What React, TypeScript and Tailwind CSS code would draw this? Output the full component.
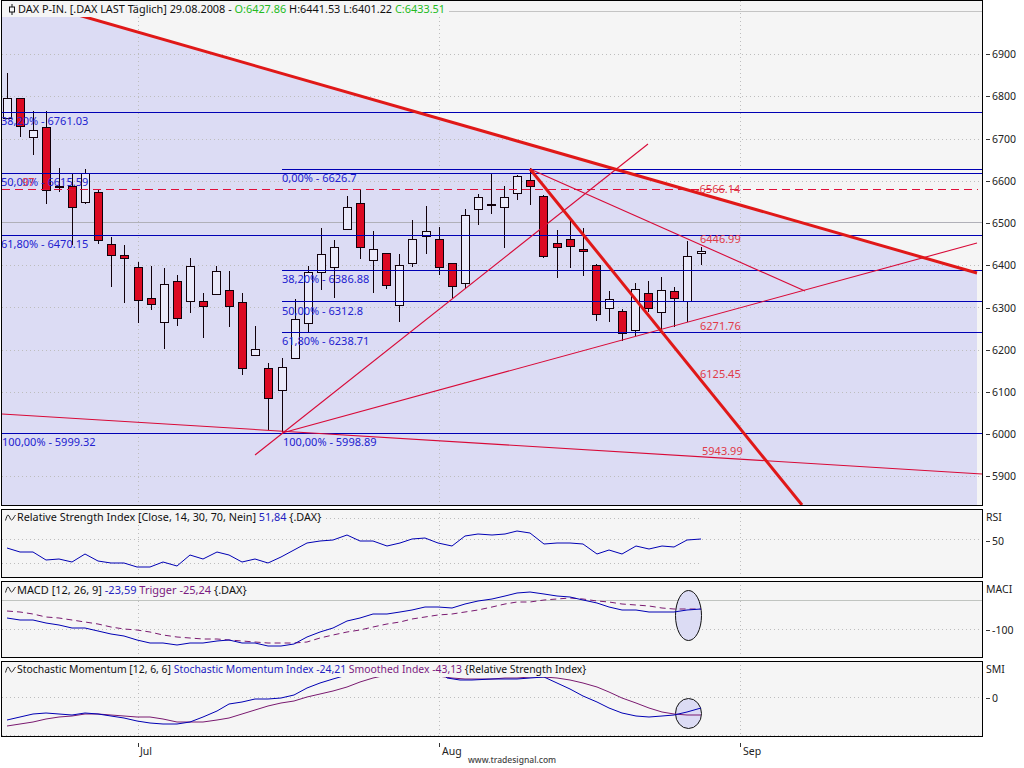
import { clsx } from "clsx";

const FONT = "font-['Noto_Sans',sans-serif]";

const BLUE = "#0000b4";
const THIN_RED = "#d80a38";
const VERTICALS = [138.5, 439.5, 740.5];

// x, high, low, body top, body bottom, red?
const candles: [number, number, number, number, number, boolean][] = [
  [7.5, 73, 118, 98, 118, false],
  [20.5, 98, 137, 98, 126, true],
  [33.5, 111, 155, 130, 137, false],
  [46.5, 111, 204, 127, 190, true],
  [59.5, 168, 192, 186, 187, false],
  [72.5, 173, 245, 186, 207, true],
  [85.5, 169, 204, 173, 202, false],
  [98.5, 190, 244, 192, 240, true],
  [111.5, 237, 287, 244, 255, true],
  [124.5, 245, 303, 255, 258, true],
  [138.5, 262, 323, 267, 300, true],
  [151.5, 266, 310, 298, 304, true],
  [164.5, 268, 349, 284, 322, false],
  [177.5, 275, 326, 281, 318, true],
  [190.5, 258, 313, 266, 301, false],
  [203.5, 293, 338, 301, 306, true],
  [216.5, 266, 294, 271, 294, false],
  [229.5, 271, 327, 290, 306, true],
  [242.5, 293, 375, 302, 368, true],
  [255.5, 326, 355, 349, 355, false],
  [268.5, 363, 430, 368, 398, true],
  [282.5, 358, 432, 367, 390, false],
  [295.5, 299, 358, 319, 358, false],
  [308.5, 266, 333, 272, 323, false],
  [321.5, 228, 290, 254, 272, false],
  [334.5, 240, 298, 247, 267, false],
  [347.5, 196, 230, 207, 229, false],
  [360.5, 190, 259, 203, 247, true],
  [373.5, 231, 293, 249, 260, false],
  [386.5, 253, 289, 253, 285, true],
  [399.5, 254, 322, 265, 305, false],
  [412.5, 220, 267, 239, 263, false],
  [426.5, 206, 254, 231, 236, false],
  [439.5, 227, 275, 239, 267, true],
  [452.5, 263, 298, 263, 286, true],
  [465.5, 209, 289, 215, 283, false],
  [478.5, 194, 225, 197, 209, false],
  [491.5, 173, 214, 204, 205, false],
  [504.5, 186, 248, 197, 207, false],
  [517.5, 175, 200, 176, 193, false],
  [530.5, 168, 205, 180, 186, true],
  [543.5, 195, 258, 196, 256, true],
  [557.5, 230, 278, 243, 247, true],
  [570.5, 218, 268, 239, 246, true],
  [583.5, 228, 276, 249, 251, true],
  [596.5, 264, 321, 265, 314, true],
  [609.5, 291, 322, 299, 308, false],
  [622.5, 309, 341, 311, 333, true],
  [635.5, 283, 336, 289, 330, false],
  [648.5, 281, 312, 293, 308, true],
  [661.5, 277, 332, 290, 312, false],
  [674.5, 287, 327, 291, 298, true],
  [687.5, 241, 322, 256, 301, false],
  [701.5, 247, 265, 251, 253, false],
];

const rsi = "7,548 20,552 33,552 46,560 59,559 72,562 85,554 98,561 111,563 124,563 137,567 150,567 163,562 177,566 190,555 203,559 217,552 229,555 242,562 255,559 268,563 281,557 294,550 307,543 320,541 333,540 347,535 360,541 373,541 387,546 400,543 412,539 425,538 438,543 452,546 465,536 478,534 492,535 505,534 517,531 530,533 544,544 557,543 570,543 583,544 597,554 609,550 622,554 636,546 649,549 662,546 674,547 687,540 701,539";
const macd = "7,618 20,620 33,620 46,623 59,625 72,628 85,628 98,631 111,634 124,636 137,640 150,643 163,643 177,645 190,643 203,643 217,641 229,640 242,643 255,643 268,646 281,646 294,644 307,637 320,632 333,628 347,621 360,618 373,614 387,614 400,612 412,610 425,607 438,607 452,608 465,604 478,601 492,599 505,596 517,593 530,592 544,594 557,596 570,597 583,600 597,603 609,607 622,610 636,610 649,612 662,612 674,612 687,610 701,609";
const trigger = "7,611 20,612 33,614 46,617 59,618 72,620 85,622 98,624 111,627 124,629 137,630 150,632 163,635 177,637 190,638 203,639 217,639 229,640 242,641 255,642 268,643 281,643 294,643 307,642 320,638 333,635 347,632 360,630 373,627 387,624 400,622 412,619 425,617 438,615 452,614 465,612 478,610 492,607 505,604 517,602 530,602 544,600 557,599 570,598 583,599 597,601 609,602 622,604 636,605 649,606 662,608 674,609 687,609 701,609";
const smi = "7,720 20,717 33,714 46,713 59,714 72,715 85,713 98,714 111,716 124,718 137,721 150,723 163,724 177,724 190,722 203,717 217,711 229,704 242,702 255,699 268,699 281,698 294,695 307,688 320,683 333,679 347,675 360,673 373,671 387,671 440,671 447,678 460,680 472,680 492,679 505,679 517,679 530,678 544,677 557,683 570,689 583,696 597,702 609,708 622,713 636,716 649,717 662,716 674,715 687,712 701,708";
const smooth = "7,726 20,724 33,722 46,719 59,717 72,716 85,714 98,714 111,715 124,716 137,717 150,717 163,719 177,722 190,722 203,722 217,720 229,718 242,714 255,710 268,706 281,703 294,701 307,697 320,694 333,691 347,687 360,682 373,678 387,675 400,673 412,673 425,674 438,676 452,678 465,679 478,679 492,679 505,678 517,678 530,677 544,677 557,678 570,680 583,683 597,687 609,692 622,698 636,703 649,708 662,712 674,714 687,715 701,715";

const priceAxis = [
  [6900, 54],
  [6800, 96],
  [6700, 139],
  [6600, 181],
  [6500, 223],
  [6400, 265],
  [6300, 308],
  [6200, 350],
  [6100, 392],
  [6000, 434],
  [5900, 476],
];

const blueLabels: [string, number, number][] = [
  ["38,20% - 6761.03", 1, 125],
  ["50,00% - 6615.59", 1, 186],
  ["61,80% - 6470.15", 1, 248],
  ["100,00% - 5999.32", 2, 446],
  ["0,00% - 6626.7", 282, 182],
  ["38,20% - 6386.88", 282, 283],
  ["50,00% - 6312.8", 282, 315],
  ["61,80% - 6238.71", 282, 345],
  ["100,00% - 5998.89", 283, 446],
];

const redLabels: [string, number, number][] = [
  ["97", 22, 186],
  ["-6566.14", 696, 193],
  ["6446.99", 700, 243],
  ["6271.76", 700, 330],
  ["6125.45", 700, 378],
  ["5943.99", 702, 455],
];

function Grid({ ys, top, bottom, right = 982 }: { ys: number[]; top: number; bottom: number; right?: number }) {
  return (
    <g stroke="#bdbdbd" strokeDasharray="1 3" strokeWidth="1">
      {ys.map((y) => (
        <line key={y} x1="2" x2={right} y1={y} y2={y} />
      ))}
      {VERTICALS.map((x) => (
        <line key={x} x1={x} x2={x} y1={top} y2={bottom} />
      ))}
    </g>
  );
}

function Candle({ c }: { c: (typeof candles)[number] }) {
  const [x, high, low, top, bottom, red] = c;
  return (
    <g stroke="#10000a">
      <line x1={x} x2={x} y1={high} y2={low} />
      <rect x={x - 4} y={top + 0.5} width="8" height={bottom - top} fill={red ? "#dc0a22" : "#eaeafa"} />
    </g>
  );
}

function WaveIcon() {
  return (
    <svg width="11" height="7" viewBox="0 0 11 7" className="mr-px shrink-0" fill="none" stroke="#222">
      <path d="M0.5 6.5C1.5 3.5 2 1 3 1C4.5 1 5 6 6.5 6C8 6 9 2.5 10.5 1" />
    </svg>
  );
}

function Legend({ className, children }: { className: string; children: React.ReactNode }) {
  return (
    <div className={clsx("absolute left-0 top-0 flex h-[15px] items-center whitespace-nowrap bg-[#f5f5f5] pl-[3px] pr-1 leading-none text-[#111]", className)}>
      <WaveIcon />
      {children}
    </div>
  );
}

function AxisLabel({ y, tick, children }: { y: number; tick?: boolean; children: React.ReactNode }) {
  return (
    <div className="absolute left-0 flex h-[14px] items-center text-[10.5px] leading-none text-[#222]" style={{ top: y - 7 }}>
      {tick ? <span className="mr-[2px] ml-[3px] h-px w-[4px] bg-[#333]" /> : <span className="ml-[3px]" />}
      {children}
    </div>
  );
}

function Panel({ top, height, label, ticks, legendSize, legend, grid }: {
  top: number;
  height: number;
  label: string;
  ticks: [string, number][];
  legendSize: string;
  legend: React.ReactNode;
  grid: React.ReactNode;
}) {
  return (
    <div className="flex" style={{ height }}>
      <div className="relative w-[982px] shrink-0 overflow-hidden border border-black bg-[#f5f5f5]">
        <svg width="980" height={height - 2} viewBox={`2 ${top + 1} 980 ${height - 2}`} className="block">
          {grid}
        </svg>
        <Legend className={legendSize}>{legend}</Legend>
      </div>
      <div className="relative flex-1">
        <AxisLabel y={8}>{label}</AxisLabel>
        {ticks.map(([text, y]) => (
          <AxisLabel key={text} y={y - top} tick>
            {text}
          </AxisLabel>
        ))}
      </div>
    </div>
  );
}

export default function App() {
  return (
    <div className={`${FONT} flex h-[768px] w-[1024px] flex-col gap-[3px] overflow-hidden bg-white pl-px`}>
      <div className="flex h-[506px]">
        <div className="relative w-[982px] shrink-0 overflow-hidden border border-black bg-[#f5f5f5]">
          <svg width="980" height="504" viewBox="2 1 980 504" className="block text-[11px]">
            <polygon points="2,17 85,17 977,273 977,505 2,505" fill="#dcdcf4" />
            <line x1="2" x2="982" y1="11.5" y2="11.5" stroke="#c4c4c4" />
            <line x1="2" x2="982" y1="222.5" y2="222.5" stroke="#b0b0b8" />
            <Grid ys={[54.5, 96.5, 139.5, 181.5, 265.5, 307.5, 350.5, 392.5, 476.5]} top={1} bottom={505} />
            {candles.map((c) => (
              <Candle key={c[0]} c={c} />
            ))}
            <g stroke={BLUE} strokeWidth="1.15">
              <line x1="2" x2="982" y1="112.5" y2="112.5" />
              <line x1="282" x2="982" y1="169.5" y2="169.5" />
              <line x1="2" x2="982" y1="173.5" y2="173.5" />
              <line x1="2" x2="982" y1="235.5" y2="235.5" />
              <line x1="282" x2="982" y1="270.5" y2="270.5" />
              <line x1="282" x2="982" y1="301.5" y2="301.5" />
              <line x1="282" x2="982" y1="332.5" y2="332.5" />
              <line x1="2" x2="982" y1="433.5" y2="433.5" />
            </g>
            <line x1="2" x2="978" y1="189.5" y2="189.5" stroke="#e0103a" strokeWidth="1.2" strokeDasharray="8 5" />
            <g stroke={THIN_RED} strokeWidth="1.1">
              <line x1="255" y1="455" x2="648" y2="144" />
              <line x1="282" y1="433" x2="977" y2="243" />
              <line x1="530" y1="169" x2="805" y2="291" />
              <line x1="2" y1="414" x2="982" y2="474" />
            </g>
            <g stroke="#e01818" strokeWidth="3">
              <line x1="33" y1="2" x2="977" y2="273" />
              <line x1="530" y1="169" x2="802" y2="505" />
            </g>
            {blueLabels.map(([text, x, y]) => (
              <text key={text} x={x} y={y} className="fill-[#2222d0]">
                {text}
              </text>
            ))}
            {redLabels.map(([text, x, y]) => (
              <text key={text} x={x} y={y} className="fill-[#e03a48]">
                {text}
              </text>
            ))}
          </svg>
          <div className="absolute left-0 top-0 flex h-[16px] items-center whitespace-nowrap bg-[#f5f5f5] pl-[7px] pr-1 text-[10.9px] leading-none text-[#111]">
            <svg width="6" height="11" viewBox="0 0 6 11" className="mr-[3px] shrink-0" fill="none" stroke="#111">
              <path d="M3 0V3M3 8V11" />
              <rect x="0.5" y="3" width="5" height="5" />
            </svg>
            <span>DAX P-IN. [.DAX LAST Täglich] 29.08.2008 -&nbsp;</span>
            <span className="text-[#22bb22]">O:6427.86</span>
            <span>&nbsp;H:6441.53 L:6401.22&nbsp;</span>
            <span className="text-[#22bb22]">C:6433.51</span>
          </div>
        </div>
        <div className="relative flex-1">
          {priceAxis.map(([price, y]) => (
            <AxisLabel key={price} y={y} tick>
              {price}
            </AxisLabel>
          ))}
        </div>
      </div>

      <Panel
        top={509}
        height={69}
        label="RSI"
        ticks={[["50", 541]]}
        legendSize="text-[10.8px]"
        legend={
          <>
            <span>Relative Strength Index [Close, 14, 30, 70, Nein]&nbsp;</span>
            <span className="text-[#2222c0]">51,84</span>
            <span>&nbsp;{"{.DAX}"}</span>
          </>
        }
        grid={
          <>
            <Grid ys={[539.5]} top={509} bottom={577} />
            <Grid ys={[518.5, 563.5]} top={509} bottom={509} right={702} />
            <polyline points={rsi} fill="none" stroke={BLUE} />
          </>
        }
      />

      <Panel
        top={581}
        height={77}
        label="MACI"
        ticks={[["-100", 630]]}
        legendSize="text-[11px]"
        legend={
          <>
            <span>MACD [12, 26, 9]&nbsp;</span>
            <span className="text-[#2222c0]">-23,59</span>
            <span className="text-[#7a1a80]">&nbsp;Trigger -25,24</span>
            <span>&nbsp;{"{.DAX}"}</span>
          </>
        }
        grid={
          <>
            <line x1="2" x2="982" y1="600.5" y2="600.5" stroke="#c0c4c0" />
            <Grid ys={[629.5]} top={581} bottom={657} />
            <ellipse cx="688.5" cy="615.5" rx="13" ry="25" fill="#dcdcf4" stroke="#111" />
            <polyline points={trigger} fill="none" stroke="#7a1a70" strokeDasharray="6 4" />
            <polyline points={macd} fill="none" stroke={BLUE} />
          </>
        }
      />

      <Panel
        top={661}
        height={76}
        label="SMI"
        ticks={[["0", 698]]}
        legendSize="text-[10.4px]"
        legend={
          <>
            <span>Stochastic Momentum [12, 6, 6]&nbsp;</span>
            <span className="text-[#2222c0]">Stochastic Momentum Index -24,21</span>
            <span className="text-[#7a1a80]">&nbsp;Smoothed Index -43,13</span>
            <span>&nbsp;{"{Relative Strength Index}"}</span>
          </>
        }
        grid={
          <>
            <Grid ys={[697.5, 735.5]} top={661} bottom={736} />
            <ellipse cx="688.5" cy="713.5" rx="13" ry="15" fill="#dcdcf4" stroke="#111" />
            <polyline points={smooth} fill="none" stroke="#7a1a70" />
            <polyline points={smi} fill="none" stroke={BLUE} />
          </>
        }
      />

      <div className="relative flex-1 text-[10.5px] leading-none text-[#222]">
        <div className="absolute left-[137px] top-[3px] h-[4px] w-px bg-[#333]" />
        <div className="absolute left-[438px] top-[3px] h-[4px] w-px bg-[#333]" />
        <div className="absolute left-[739px] top-[3px] h-[4px] w-px bg-[#333]" />
        <span className="absolute left-[139px] top-[6px]">Jul</span>
        <span className="absolute left-[441px] top-[6px]">Aug</span>
        <span className="absolute left-[742px] top-[6px]">Sep</span>
        <span className="absolute left-[467px] top-[16px] text-[8.5px] font-medium text-[#444]">www.tradesignal.com</span>
      </div>
    </div>
  );
}
